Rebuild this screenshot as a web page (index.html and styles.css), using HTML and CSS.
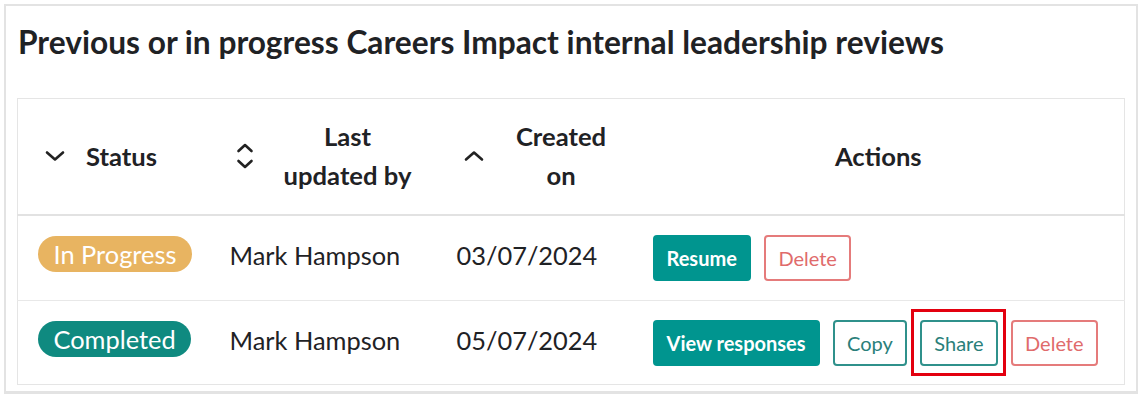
FILE: index.html
```html
<!DOCTYPE html>
<html lang="en">
<head>
<meta charset="utf-8">
<title>Reviews</title>
<link rel="stylesheet" href="styles.css">
</head>
<body>
<section class="card">
  <h2 class="title">Previous or in progress Careers Impact internal leadership reviews</h2>
  <table class="reviews">
    <colgroup>
      <col class="c-status"><col class="c-by"><col class="c-created"><col class="c-actions">
    </colgroup>
    <thead>
      <tr>
        <th>
          <div class="th-inner left">
            <svg class="ico" width="24" height="24" viewBox="0 0 24 24"><path d="M4 8.5l8 7 8-7" /></svg>
            <span class="label">Status</span>
          </div>
        </th>
        <th>
          <div class="th-inner">
            <svg class="ico sort" width="20" height="30" viewBox="0 0 20 30"><path d="M3.5 10l6.5-6 6.5 6" /><path d="M3.5 20l6.5 6 6.5-6" /></svg>
            <span class="label">Last<br>updated by</span>
          </div>
        </th>
        <th>
          <div class="th-inner">
            <svg class="ico" width="24" height="24" viewBox="0 0 24 24"><path d="M4 15.5l8-7 8 7" /></svg>
            <span class="label">Created<br>on</span>
          </div>
        </th>
        <th class="th-actions">Actions</th>
      </tr>
    </thead>
    <tbody>
      <tr>
        <td class="txt"><span class="badge progress">In Progress</span></td>
        <td class="txt">Mark Hampson</td>
        <td class="txt">03/07/2024</td>
        <td>
          <div class="actions">
            <button class="btn primary">Resume</button>
            <button class="btn danger">Delete</button>
          </div>
        </td>
      </tr>
      <tr>
        <td class="txt"><span class="badge done">Completed</span></td>
        <td class="txt">Mark Hampson</td>
        <td class="txt">05/07/2024</td>
        <td>
          <div class="actions">
            <button class="btn primary">View responses</button>
            <button class="btn outline">Copy</button>
            <span class="highlight"><button class="btn outline">Share</button></span>
            <button class="btn danger">Delete</button>
          </div>
        </td>
      </tr>
    </tbody>
  </table>
</section>
</body>
</html>
```

FILE: styles.css
```css
* { box-sizing: border-box; }
html, body { margin: 0; padding: 0; background: #fff; }
body {
  font-family: Lato, "Noto Sans", Arial, sans-serif;
  color: #1f2225;
  padding: 4px 6px 0 4px;
}
.card {
  border: 2px solid #e3e3e3;
  border-bottom-width: 3px;
  padding: 16px 11px 7px 11px;
  height: 390px;
}
.title {
  margin: 0 0 36px 1px;
  font-size: 31.7px;
  font-weight: 700;
  line-height: 40px;
  color: #1f2225;
}
.reviews {
  width: 100%;
  border-collapse: collapse;
  border: 1px solid #e5e5e5;
  font-size: 25.4px;
}
.c-status { width: 192px; }
.c-by { width: 227px; }
.c-created { width: 196px; }
.reviews th {
  font-weight: 700;
  font-size: 25.6px;
  height: 116px;
  padding: 0 6px 0 25px;
  border-bottom: 2px solid #e2e2e2;
  text-align: left;
  vertical-align: middle;
  line-height: 39px;
}
.th-inner { display: flex; align-items: center; }
.th-inner .label { flex: 1; text-align: center; margin-left: 10px; }
.th-inner.left .label { flex: none; text-align: left; margin-left: 19px; }
.ico { flex: none; fill: none; stroke: #222; stroke-width: 2.6; stroke-linecap: round; stroke-linejoin: round; }
.reviews th.th-actions { text-align: center; padding: 0; }
.reviews td {
  padding: 0 10px 0 20px;
  height: 84px;
  border-top: 1px solid #e8e8e8;
  vertical-align: middle;
  white-space: nowrap;
}
.reviews td.txt { padding-bottom: 6px; }
.reviews tbody tr:first-child td { border-top: none; height: 86px; }
.badge {
  display: inline-block;
  height: 36px;
  line-height: 36px;
  padding: 0 15.5px;
  border-radius: 18px;
  color: #fff;
  font-size: 25.4px;
  position: relative;
  top: -1px;
}
.badge.progress { background: #e8b461; }
.badge.done { background: #0f8a80; }
.actions { display: flex; align-items: center; gap: 13.5px; }
.btn {
  font-family: Lato, "Noto Sans", Arial, sans-serif;
  font-size: 20px;
  height: 46px;
  padding: 0 12px;
  border-radius: 4px;
  background: #fff;
  border: 2px solid;
  cursor: pointer;
}
.btn.primary { background: #00958f; border-color: #00958f; color: #fff; font-weight: 700; }
.btn.outline { border-color: #2f918b; color: #2a7f7a; }
.btn.danger { border-color: #e57b7b; color: #e06b6b; }
.highlight { position: relative; display: inline-block; line-height: 0; }
.highlight::after {
  content: "";
  position: absolute;
  left: -9px; right: -8px; top: -11px; bottom: -10px;
  border: 3px solid #e3000f;
  pointer-events: none;
}
```
